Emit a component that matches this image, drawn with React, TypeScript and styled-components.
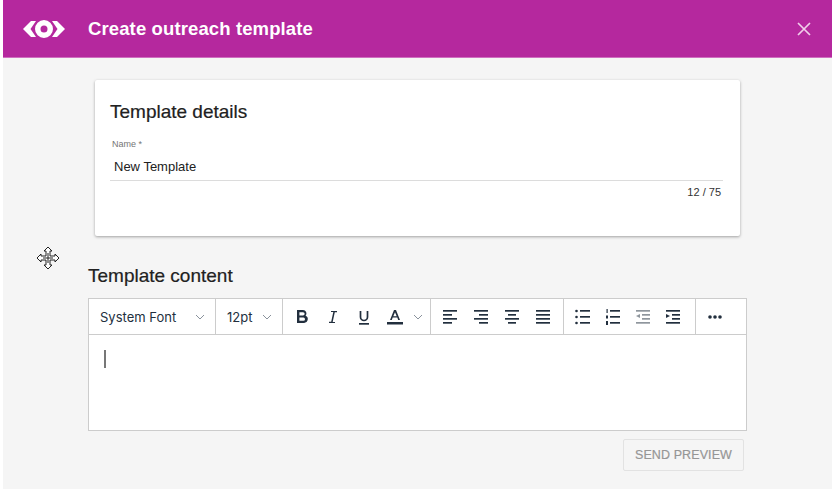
import styled, { createGlobalStyle } from 'styled-components';

const GlobalStyle = createGlobalStyle`
  html, body {
    margin: 0;
    padding: 0;
    background: #fff;
    font-family: 'Liberation Sans', Arial, sans-serif;
  }
`;

const Page = styled.div`
  position: relative;
  width: 832px;
  height: 489px;
  padding-left: 3px;
  box-sizing: border-box;
  overflow: hidden;
`;

const Dialog = styled.div`
  height: 100%;
  display: flex;
  flex-direction: column;
  background: #f5f5f5;
`;

const Header = styled.header`
  height: 58px;
  flex: none;
  display: flex;
  align-items: center;
  padding: 0 20px 0 19px;
  background: #b5289e;
  border-bottom: 1px solid #cf6fc0;
  box-sizing: border-box;
  color: #fff;
`;

const Logo = styled.svg`
  width: 44px;
  height: 20px;
  flex: none;
`;

const Title = styled.h1`
  flex: 1;
  margin: 0 0 0 22px;
  font-size: 18.5px;
  font-weight: 700;
  letter-spacing: 0.12px;
`;

const CloseButton = styled.button`
  display: flex;
  padding: 0;
  border: none;
  background: none;
  color: #f0cfea;
`;

const Body = styled.main`
  display: flex;
  flex-direction: column;
  padding: 22px 0 0 85px;
`;

const Card = styled.section`
  width: 645px;
  height: 156px;
  margin-left: 7px;
  padding: 21px 17px 0 15px;
  box-sizing: border-box;
  background: #fff;
  border-radius: 2px;
  box-shadow: 0 1px 3px rgba(0, 0, 0, 0.35);
`;

const CardTitle = styled.h2`
  margin: 0;
  font-size: 19px;
  line-height: 21px;
  font-weight: 400;
  color: #212121;
  -webkit-text-stroke: 0.2px #212121;
`;

const FieldLabel = styled.label`
  display: block;
  margin: 16px 0 0 2px;
  font-size: 9px;
  line-height: 12px;
  color: #757575;
`;

const FieldValue = styled.div`
  margin-top: 9px;
  padding: 0 0 5px 4px;
  font-size: 13px;
  line-height: 16px;
  color: #212121;
  border-bottom: 1px solid #dcdcdc;
`;

const Counter = styled.div`
  margin-top: 4px;
  padding-right: 2px;
  text-align: right;
  font-size: 11px;
  line-height: 14px;
  color: #333;
`;

const SectionTitle = styled.h2`
  margin: 29px 0 11px;
  font-size: 19px;
  line-height: 22px;
  font-weight: 400;
  color: #212121;
  -webkit-text-stroke: 0.2px #212121;
`;

const Editor = styled.div`
  width: 659px;
  height: 133px;
  box-sizing: border-box;
  background: #fff;
  border: 1px solid #ccc;
`;

const Toolbar = styled.div`
  height: 36px;
  display: flex;
  box-sizing: border-box;
  border-bottom: 1px solid #ccc;
`;

const ToolGroup = styled.div<{ $width: number; $gap?: number }>`
  width: ${({ $width }) => $width}px;
  flex: none;
  display: flex;
  align-items: center;
  gap: ${({ $gap }) => $gap ?? 0}px;
  padding-left: ${({ $gap }) => ($gap ? 9 : 0)}px;
  box-sizing: border-box;
  border-right: 1px solid #ccc;
  &:last-child {
    border-right: none;
  }
`;

const Select = styled.div<{ $pad: number }>`
  flex: 1;
  display: flex;
  align-items: center;
  justify-content: space-between;
  padding: 0 10px 0 ${({ $pad }) => $pad}px;
  font-family: Inter, 'Noto Sans', sans-serif;
  font-size: 13px;
  color: #222f3e;
`;

const ToolIcon = styled.svg`
  width: 20px;
  height: 20px;
  flex: none;
  color: #222f3e;
`;

const Chevron = styled.svg`
  width: 10px;
  height: 6px;
  flex: none;
  color: #8a929c;
`;

const ColorChevron = styled(Chevron)`
  margin-left: -3px;
`;

const Content = styled.div`
  padding: 15px 15px 0;
`;

const Caret = styled.div`
  width: 2px;
  height: 18px;
  background: #777;
`;

const Actions = styled.div`
  width: 656px;
  display: flex;
  justify-content: flex-end;
  margin-top: 8px;
`;

const PreviewButton = styled.button`
  width: 121px;
  height: 32px;
  padding: 0;
  font-family: inherit;
  font-size: 12.5px;
  letter-spacing: 0.1px;
  color: #969696;
  -webkit-text-stroke: 0.2px #969696;
  background: #f5f5f5;
  border: 1px solid #e2e2e2;
  border-radius: 2px;
`;

const MoveCursor = styled.svg`
  position: absolute;
  left: 36px;
  top: 246px;
  width: 24px;
  height: 24px;
`;

const chevronPath = (
  <path d="M1 1l4 4 4-4" fill="none" stroke="currentColor" strokeWidth="1" />
);

const lines = (rows: Array<[number, number, number]>) => (
  <g fill="currentColor">
    {rows.map(([x, y, w], i) => (
      <rect key={i} x={x} y={y} width={w} height={1.7} />
    ))}
  </g>
);

const alignIcons: Array<Array<[number, number, number]>> = [
  [[3, 3, 14], [3, 7, 9], [3, 11, 14], [3, 15, 9]],
  [[3, 3, 14], [8, 7, 9], [3, 11, 14], [8, 15, 9]],
  [[3, 3, 14], [6, 7, 8], [3, 11, 14], [6, 15, 8]],
  [[3, 3, 14], [3, 7, 14], [3, 11, 14], [3, 15, 14]],
];

export default function App() {
  return (
    <Page>
      <GlobalStyle />
      <Dialog>
        <Header>
          <Logo viewBox="0 0 44 20">
            <g fill="#fff">
              <path d="M9 2h5l-5.500 8 5.500 8H9L1 10z" />
              <path d="M35 2h-5l5.500 8-5.500 8h5l8-8z" />
              <path
                fillRule="evenodd"
                d="M22 1a9 9 0 1 0 0 18 9 9 0 0 0 0-18zm0 5.500a3.500 3.500 0 1 1 0 7 3.500 3.500 0 0 1 0-7z"
              />
            </g>
          </Logo>
          <Title>Create outreach template</Title>
          <CloseButton aria-label="Close">
            <svg width="16" height="16" viewBox="0 0 16 16">
              <path d="M2 2l12 12M14 2L2 14" stroke="currentColor" strokeWidth="1.700" />
            </svg>
          </CloseButton>
        </Header>
        <Body>
          <Card>
            <CardTitle>Template details</CardTitle>
            <FieldLabel>Name *</FieldLabel>
            <FieldValue>New Template</FieldValue>
            <Counter>12 / 75</Counter>
          </Card>
          <SectionTitle>Template content</SectionTitle>
          <Editor>
            <Toolbar>
              <ToolGroup $width={127}>
                <Select $pad={11}>
                  System Font
                  <Chevron viewBox="0 0 10 6">{chevronPath}</Chevron>
                </Select>
              </ToolGroup>
              <ToolGroup $width={67}>
                <Select $pad={11}>
                  12pt
                  <Chevron viewBox="0 0 10 6">{chevronPath}</Chevron>
                </Select>
              </ToolGroup>
              <ToolGroup $width={148} $gap={11}>
                <ToolIcon viewBox="0 0 20 20">
                  <path
                    fill="currentColor"
                    fillRule="evenodd"
                    d="M5 3h6a3.500 3.500 0 0 1 2.600 5.800A3.800 3.800 0 0 1 11.500 16H5zm2.400 2.200v3.300H11a1.650 1.650 0 0 0 0-3.300zm0 5.400v3.200h4a1.600 1.600 0 0 0 0-3.200z"
                  />
                </ToolIcon>
                <ToolIcon viewBox="0 0 20 20">
                  <path fill="currentColor" d="M8 4h6v1.300h-2.200L9.700 15H12v1H6v-1.300h2.200l2.100-9.700H8z" />
                </ToolIcon>
                <ToolIcon viewBox="0 0 20 20">
                  <path
                    fill="none"
                    stroke="currentColor"
                    strokeWidth="1.700"
                    d="M6.500 4v6a3.500 3.500 0 0 0 7 0V4"
                  />
                  <rect x="5" y="16" width="10" height="1.700" fill="currentColor" />
                </ToolIcon>
                <ToolIcon viewBox="0 0 20 20">
                  <path
                    fill="currentColor"
                    fillRule="evenodd"
                    d="M9 3h2l4 10h-1.800l-.9-2.400H7.700L6.800 13H5zm1 2.200L8.300 9.200h3.400z"
                  />
                  <rect x="2" y="15" width="16" height="2.500" fill="currentColor" />
                </ToolIcon>
                <ColorChevron viewBox="0 0 10 6">{chevronPath}</ColorChevron>
              </ToolGroup>
              <ToolGroup $width={133} $gap={11}>
                {alignIcons.map((rows, i) => (
                  <ToolIcon key={i} viewBox="0 0 20 20">
                    {lines(rows)}
                  </ToolIcon>
                ))}
              </ToolGroup>
              <ToolGroup $width={132} $gap={10}>
                <ToolIcon viewBox="0 0 20 20">
                  <g fill="currentColor">
                    <circle cx="3.500" cy="4" r="1.300" />
                    <circle cx="3.500" cy="10" r="1.300" />
                    <circle cx="3.500" cy="16" r="1.300" />
                  </g>
                  {lines([[7, 3, 10], [7, 9, 10], [7, 15, 10]])}
                </ToolIcon>
                <ToolIcon viewBox="0 0 20 20">
                  <g fill="currentColor">
                    <rect x="3.500" y="2" width="1.200" height="4" />
                    <rect x="3" y="8.500" width="2" height="3" />
                    <rect x="3" y="14" width="2" height="4" />
                  </g>
                  {lines([[7, 3, 10], [7, 9, 10], [7, 15, 10]])}
                </ToolIcon>
                <ToolIcon viewBox="0 0 20 20">
                  <g opacity="0.5">
                    {lines([[3, 3, 14], [9, 7, 8], [9, 11, 8], [3, 15, 14]])}
                    <path d="M7 7v4L3 9z" fill="currentColor" />
                  </g>
                </ToolIcon>
                <ToolIcon viewBox="0 0 20 20">
                  {lines([[3, 3, 14], [9, 7, 8], [9, 11, 8], [3, 15, 14]])}
                  <path d="M3 7v4l4-2z" fill="currentColor" />
                </ToolIcon>
              </ToolGroup>
              <ToolGroup $width={50} $gap={11}>
                <ToolIcon viewBox="0 0 20 20">
                  <g fill="currentColor">
                    <circle cx="5" cy="10" r="1.800" />
                    <circle cx="10" cy="10" r="1.800" />
                    <circle cx="15" cy="10" r="1.800" />
                  </g>
                </ToolIcon>
              </ToolGroup>
            </Toolbar>
            <Content>
              <Caret />
            </Content>
          </Editor>
          <Actions>
            <PreviewButton disabled>SEND PREVIEW</PreviewButton>
          </Actions>
        </Body>
      </Dialog>
      <MoveCursor viewBox="0 0 24 24">
        <path
          fill="#fff"
          stroke="#222"
          strokeWidth="1"
          d="M12 1l4 4h-2v5h5V8l4 4-4 4v-2h-5v5h2l-4 4-4-4h2v-5H5v2l-4-4 4-4v2h5V5H8z"
        />
        <path d="M12 7v10M7 12h10" stroke="#222" strokeWidth="1" fill="none" />
      </MoveCursor>
    </Page>
  );
}
